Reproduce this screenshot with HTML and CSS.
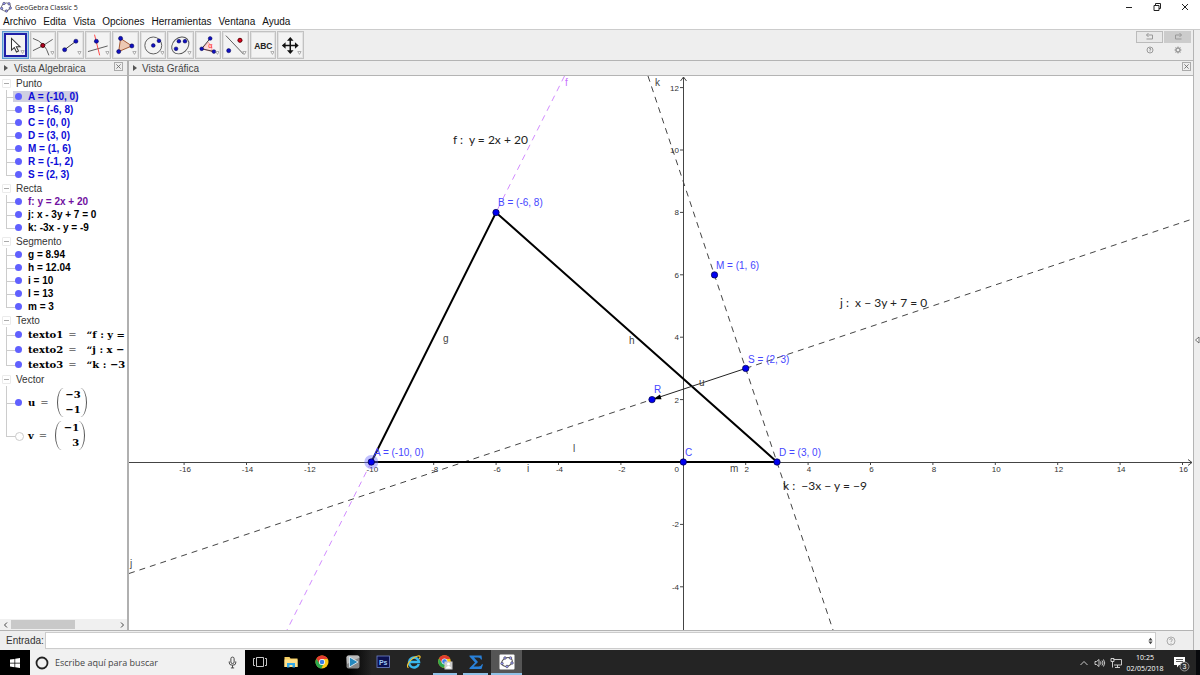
FILE: index.html
```html
<!DOCTYPE html>
<html lang="es">
<head>
  <meta charset="UTF-8" />
  <meta name="viewport" content="width=device-width, initial-scale=1.0" />
  <title>GeoGebra Classic 5</title>
  <link rel="stylesheet" href="styles.css">
</head>
<body>
  <header class="titlebar">
    <svg class="app-logo" viewBox="0 0 12 12"><ellipse cx="6" cy="6" rx="4.6" ry="3.8" transform="rotate(-25 6 6)" fill="none" stroke="#667" stroke-width="1"/><g fill="#9999ff" stroke="#445" stroke-width=".6"><circle cx="4" cy="2.5" r="1.2"/><circle cx="9" cy="2.8" r="1.2"/><circle cx="10.3" cy="7" r="1.2"/><circle cx="6.4" cy="10" r="1.2"/><circle cx="1.6" cy="7.4" r="1.2"/></g></svg>
    <span class="title">GeoGebra Classic 5</span>
    <div class="window-buttons">
      <button aria-label="Minimizar"><svg viewBox="0 0 10 10"><path d="M2 5.5h6"/></svg></button>
      <button aria-label="Restaurar"><svg viewBox="0 0 10 10"><path d="M2 3.5h5v5h-5zM3.5 3.5v-2h5v5h-1.5"/></svg></button>
      <button aria-label="Cerrar"><svg viewBox="0 0 10 10"><path d="M2 2l6 6M8 2l-6 6"/></svg></button>
    </div>
  </header>

  <nav class="menubar">
    <button>Archivo</button>
    <button>Edita</button>
    <button>Vista</button>
    <button>Opciones</button>
    <button>Herramientas</button>
    <button>Ventana</button>
    <button>Ayuda</button>
  </nav>

  <main class="workspace">
    <div class="workspace-main">
      <div class="toolbar">
        <div class="tools">
          <button class="tool selected" aria-label="Elige y mueve"><svg viewBox="0 0 24 24"><path d="M8 5v12.500l3-2.700 2.300 4.700 2.200-1-2.400-4.700h4z" fill="#fff" stroke="#333" stroke-width="1.100"/><path class="more" d="M18 18h3.500l-1.700 3z"/></svg></button>
          <button class="tool" aria-label="Intersección"><svg viewBox="0 0 24 24"><path d="M1 5q13 4 17 18M1 18Q11 14 22 6" fill="none" stroke="#555"/><circle cx="11.500" cy="12.500" r="2.200" fill="#b00020" stroke="#400"/><path class="more" d="M20 19h3.500l-1.700 3z"/></svg></button>
          <button class="tool" aria-label="Segmento"><svg viewBox="0 0 24 24"><path d="M6 17L18 8" stroke="#333"/><circle cx="6" cy="17" r="2.200" class="pt"/><circle cx="18" cy="8" r="2.200" class="pt"/><path class="more" d="M20 19h3.500l-1.700 3z"/></svg></button>
          <button class="tool" aria-label="Perpendicular"><svg viewBox="0 0 24 24"><path d="M1 19L22 13" stroke="#555"/><path d="M8 1l5.500 22" stroke="#ff4040"/><circle cx="10" cy="8" r="2.200" class="pt"/><path class="more" d="M20 19h3.500l-1.700 3z"/></svg></button>
          <button class="tool" aria-label="Polígono"><svg viewBox="0 0 24 24"><path d="M7 5l12 8-14 6z" fill="#edc9b4" stroke="#a0522d"/><circle cx="7" cy="5" r="2.200" class="pt"/><circle cx="19" cy="13" r="2.200" class="pt"/><circle cx="5" cy="19" r="2.200" class="pt"/><path class="more" d="M20 19h3.500l-1.700 3z"/></svg></button>
          <button class="tool" aria-label="Circunferencia"><svg viewBox="0 0 24 24"><circle cx="12" cy="12.500" r="9" fill="none" stroke="#555"/><circle cx="12" cy="12.500" r="2" class="pt"/><circle cx="18" cy="7.500" r="2" class="pt"/><path class="more" d="M20 19h3.500l-1.700 3z"/></svg></button>
          <button class="tool" aria-label="Elipse"><svg viewBox="0 0 24 24"><ellipse cx="12" cy="12.500" rx="10" ry="8" transform="rotate(-42 12 12.500)" fill="none" stroke="#555"/><circle cx="10.500" cy="8" r="2" class="pt"/><circle cx="17" cy="8" r="2" class="pt"/><circle cx="7.500" cy="16" r="2" class="pt"/><path class="more" d="M20 19h3.500l-1.700 3z"/></svg></button>
          <button class="tool" aria-label="Ángulo"><svg viewBox="0 0 24 24"><path d="M5 16l7-7q5 4 4 10z" fill="#ffd8d8" stroke="#ff7070" stroke-width=".6"/><path d="M14 5L5 16l13 3" fill="none" stroke="#333"/><text x="12" y="15" font-size="8" fill="#ff3030">α</text><circle cx="14" cy="5" r="2" class="pt"/><circle cx="5" cy="16" r="2" class="pt"/><circle cx="18" cy="19" r="2" class="pt"/><path class="more" d="M20 19h3.500l-1.700 3z"/></svg></button>
          <button class="tool" aria-label="Simetría axial"><svg viewBox="0 0 24 24"><path d="M2 2l19 20" stroke="#555"/><circle cx="5" cy="18" r="2.200" class="pt"/><circle cx="17" cy="7" r="2.200" fill="#e00020" stroke="#500"/><path class="more" d="M20 19h3.500l-1.700 3z"/></svg></button>
          <button class="tool" aria-label="Texto"><svg viewBox="0 0 24 24"><text x="12" y="16" font-size="9" font-weight="bold" text-anchor="middle" fill="#222">ABC</text><path class="more" d="M20 19h3.500l-1.700 3z"/></svg></button>
          <button class="tool" aria-label="Desplaza vista gráfica"><svg viewBox="0 0 24 24"><path d="M12 6v13M5.500 12.500h13" stroke="#111" stroke-width="1.600"/><path d="M12 3.500l3.500 4h-7zM12 21.500l3.500-4h-7zM3 12.500l4-3.500v7zM21 12.500l-4-3.500v7z" fill="#111"/><path class="more" d="M20 19h3.500l-1.700 3z"/></svg></button>
        </div>
        <div class="toolbar-actions">
          <button class="undo" aria-label="Deshace"><svg viewBox="0 0 12 10"><path d="M4.500 1L2.500 3l2 2M2.500 3h6v4h-6"/></svg></button>
          <button class="redo" aria-label="Rehace"><svg viewBox="0 0 12 10"><path d="M7.500 1l2 2-2 2M9.500 3h-6v4h6"/></svg></button>
          <button aria-label="Ayuda"><svg viewBox="0 0 12 10"><circle cx="6" cy="5" r="3"/><path d="M5 4q1-1.500 2 0L6 5.500v1"/></svg></button>
          <button aria-label="Preferencias"><svg viewBox="0 0 12 10"><circle cx="6" cy="5" r="2" stroke-width="1.400"/><path d="M6 1.500v1.500M6 7v1.500M2.500 5h1.500M8 5h1.500M3.500 2.500l1 1M8.500 2.500l-1 1M3.500 7.500l1-1M8.500 7.500l-1-1"/></svg></button>
        </div>
      </div>

      <div class="views">
        <section class="algebra">
          <h2 class="view-header">
            <span class="arrow"></span>Vista Algebraica
            <button class="close" aria-label="Cierra Vista Algebraica"><svg viewBox="0 0 10 10"><path d="M2 2l6 6M8 2l-6 6"/></svg></button>
          </h2>
          <div class="tree">
            <div class="group">
              <button class="group-name"><i class="toggle"></i>Punto</button>
              <ul class="blue">
                <li><span class="selected">A = (-10, 0)</span></li>
                <li><span>B = (-6, 8)</span></li>
                <li><span>C = (0, 0)</span></li>
                <li><span>D = (3, 0)</span></li>
                <li><span>M = (1, 6)</span></li>
                <li><span>R = (-1, 2)</span></li>
                <li><span>S = (2, 3)</span></li>
              </ul>
            </div>
            <div class="group">
              <button class="group-name"><i class="toggle"></i>Recta</button>
              <ul>
                <li><span class="purple">f: y = 2x + 20</span></li>
                <li><span>j: x - 3y + 7 = 0</span></li>
                <li><span>k: -3x - y = -9</span></li>
              </ul>
            </div>
            <div class="group">
              <button class="group-name"><i class="toggle"></i>Segmento</button>
              <ul>
                <li><span>g = 8.94</span></li>
                <li><span>h = 12.04</span></li>
                <li><span>i = 10</span></li>
                <li><span>l = 13</span></li>
                <li><span>m = 3</span></li>
              </ul>
            </div>
            <div class="group">
              <button class="group-name"><i class="toggle"></i>Texto</button>
              <ul class="latex">
                <li><span>texto1</span><span class="eq">=</span><span>“f : y =</span></li>
                <li><span>texto2</span><span class="eq">=</span><span>“j : x −</span></li>
                <li><span>texto3</span><span class="eq">=</span><span>“k : −3</span></li>
              </ul>
            </div>
            <div class="group">
              <button class="group-name"><i class="toggle"></i>Vector</button>
              <ul class="latex vectors">
                <li><span>u</span><span class="eq">=</span><span class="matrix"><b>−3</b><b>−1</b></span></li>
                <li class="hidden-object"><span>v</span><span class="eq">=</span><span class="matrix"><b>−1</b><b>3</b></span></li>
              </ul>
            </div>
          </div>
          <div class="scrollbar">
            <button aria-label="Izquierda"><svg viewBox="0 0 8 8"><path d="M5 1.500L2.500 4 5 6.500"/></svg></button>
            <div class="track"><div class="thumb"></div></div>
            <button aria-label="Derecha"><svg viewBox="0 0 8 8"><path d="M3 1.500L5.500 4 3 6.500"/></svg></button>
          </div>
        </section>

        <section class="graphics">
          <h2 class="view-header">
            <span class="arrow"></span>Vista Gráfica
            <button class="close" aria-label="Cierra Vista Gráfica"><svg viewBox="0 0 10 10"><path d="M2 2l6 6M8 2l-6 6"/></svg></button>
          </h2>
          <svg class="plot" viewBox="129 76 1064 554" preserveAspectRatio="xMidYMid slice">
            <!-- axes -->
            <g class="axis">
              <path d="M129 462.500H1192M683.500 630V77M1188 459.500l4 3-4 3M680.500 81l3-4 3 4"/>
              <path id="ticks" d=""/>
            </g>
            <g class="tick-labels" id="tick-labels"></g>

            <!-- lines -->
            <path class="line-f" d="M564.500 76L496 212.500M371.300 462L287 630"/>
            <path class="line-dash" d="M129 573.500L652 399.500M745.700 368.400L1191 219.500"/>
            <path class="line-dash" d="M648 76L833 630"/>

            <!-- segments -->
            <path class="segment" d="M371.300 462L496 212.500L777 462M371.300 462H777"/>

            <!-- vector u -->
            <path class="vector" d="M745.700 368.400L657 397.900"/>
            <path d="M653 399.200l7-4.600 1.500 4.600z"/>

            <!-- points -->
            <circle cx="371.300" cy="462" r="7" fill="#6464ff" fill-opacity=".4"/>
            <g class="points">
              <circle cx="371.300" cy="462" r="3.200"/>
              <circle cx="496" cy="212.500" r="3.200"/>
              <circle cx="683.300" cy="462" r="3.200"/>
              <circle cx="777" cy="462" r="3.200"/>
              <circle cx="714.500" cy="274.900" r="3.200"/>
              <circle cx="652" cy="399.600" r="3.200"/>
              <circle cx="745.700" cy="368.400" r="3.200"/>
            </g>
            <g class="point-labels">
              <text x="374" y="456">A = (-10, 0)</text>
              <text x="498" y="206">B = (-6, 8)</text>
              <text x="685" y="456">C</text>
              <text x="779" y="456">D = (3, 0)</text>
              <text x="716" y="269">M = (1, 6)</text>
              <text x="654" y="393">R</text>
              <text x="748" y="363">S = (2, 3)</text>
            </g>
            <g class="labels">
              <text x="565" y="86" class="label-f">f</text>
              <text x="655" y="86">k</text>
              <text x="130" y="567">j</text>
              <text x="443" y="342">g</text>
              <text x="629" y="344">h</text>
              <text x="573" y="452">l</text>
              <text x="527" y="472">i</text>
              <text x="730" y="472">m</text>
              <text x="699" y="386">u</text>
            </g>
            <g class="equations">
              <text x="453" y="144">f :&nbsp; y = 2x + 20</text>
              <text x="840" y="307">j :&nbsp; x − 3y + 7 = 0</text>
              <text x="783" y="490">k :&nbsp; −3x − y = −9</text>
            </g>
          </svg>
        </section>
      </div>

      <div class="input-bar">
        <label for="entrada">Entrada:</label>
        <div class="input-box">
          <input id="entrada" type="text">
          <svg viewBox="0 0 6 8"><path d="M3 0l2.500 3.300h-5zM3 8l2.500-3.300h-5z"/></svg>
        </div>
        <button class="input-help" aria-label="Ayuda de entrada"><svg viewBox="0 0 10 10"><circle cx="5" cy="5" r="4"/><path d="M3.700 4q0-1.400 1.300-1.400T6.300 4Q6.300 4.700 5 5.500v.6M5 7v.8"/></svg></button>
      </div>
    </div>
    <button class="side-strip" aria-label="Apariencias"><svg viewBox="0 0 6 8"><path d="M5 1v6L1.500 4z"/></svg></button>
  </main>

  <footer class="taskbar">
    <button class="start" aria-label="Inicio"><svg viewBox="0 0 12 12"><path d="M1 2.500l4.500-.6v3.800H1zM6.200 1.800L11 1v4.700H6.200zM1 6.400h4.500v3.800L1 9.600zM6.200 6.400H11V11l-4.800-.7z" fill="#fff"/></svg></button>
    <div class="search">
      <svg class="cortana" viewBox="0 0 14 14"><circle cx="7" cy="7" r="5.500" fill="none" stroke="#222" stroke-width="1.800"/></svg>
      <input type="text" aria-label="Buscar" placeholder="Escribe aquí para buscar">
      <svg class="mic" viewBox="0 0 10 12"><g fill="none" stroke="#444" stroke-width=".9"><rect x="3.500" y="1" width="3" height="6" rx="1.500"/><path d="M2 5v1.500q0 2 3 2t3-2V5M5 8.500V11M3.500 11h3"/></g></svg>
    </div>
    <div class="apps">
      <button aria-label="Vista de tareas"><svg viewBox="0 0 16 16"><path d="M4.500 3.500h7v9h-7zM3 4.500H1.500v7H3M13 4.500h1.500v7H13" fill="none" stroke="#ddd" stroke-width=".9"/></svg></button>
      <button aria-label="Explorador"><svg viewBox="0 0 16 16"><path d="M1.500 3h5l1 1.500h7V13h-13z" fill="#f5ce62"/><path d="M1.500 5.500h13V13h-13z" fill="#ffe08a"/><path d="M4 13.500V9h8v4.500h-2.500V11h-3v2.500z" fill="#32a8e8"/></svg></button>
      <button aria-label="Chrome"><svg viewBox="0 0 16 16"><circle cx="8" cy="8" r="6.500" fill="#fbc817"/><path d="M2.400 4.700A6.500 6.500 0 0 1 13.800 5H8L5.200 9.500z" fill="#e33b2e"/><path d="M2.400 4.700L5.400 9.500 9 11 7.300 14.500A6.500 6.500 0 0 1 2.400 4.700z" fill="#2da94f"/><circle cx="8" cy="8" r="3" fill="#fff"/><circle cx="8" cy="8" r="2.300" fill="#3c7fe8"/></svg></button>
      <button aria-label="Reproductor"><svg viewBox="0 0 16 16"><rect x="1.500" y="1.500" width="13" height="13" rx="2" fill="#888"/><path d="M1.500 3.500q0-2 2-2h9q2 0 2 2L2 10z" fill="#bbb"/><path d="M4.500 3l8.500 5-8.500 5z" fill="#2488bd" stroke="#e8f4fa" stroke-width=".8"/></svg></button>
      <button aria-label="Photoshop"><svg viewBox="0 0 16 16"><rect x="2" y="2" width="12.500" height="11.500" fill="#0b1050" stroke="#7184c9" stroke-width=".8"/><text x="8.200" y="10.500" font-size="7" font-weight="bold" text-anchor="middle" fill="#9fc9f5">Ps</text></svg></button>
      <button aria-label="Internet Explorer"><svg viewBox="0 0 16 16"><path d="M12.800 10A5 5 0 1 1 13 8H4" fill="none" stroke="#39b7ee" stroke-width="2.500"/><path d="M2.500 13.800C-1 12.500 5 3.500 12 2q3.500-.4 1.300 3" fill="none" stroke="#f4c430" stroke-width="1.200"/></svg></button>
      <button class="open" aria-label="Chrome, sesión"><svg viewBox="0 0 16 16"><circle cx="7.500" cy="7.500" r="6.300" fill="#fbc817"/><path d="M2 4.500A6.300 6.300 0 0 1 13.300 5H7.500L5 9z" fill="#e33b2e"/><path d="M2 4.500L5 9l3.500 1.500-1.500 3.300A6.300 6.300 0 0 1 2 4.500z" fill="#2da94f"/><circle cx="7.500" cy="7.500" r="2.700" fill="#3c7fe8" stroke="#fff" stroke-width=".7"/><rect x="7.500" y="7.500" width="8" height="8" fill="#ccc"/><circle cx="11.500" cy="10" r="1.500" fill="#fff"/><path d="M9 14.500q0-2.500 2.500-2.500t2.500 2.500z" fill="#fff"/></svg></button>
      <button class="open" aria-label="Sumatorio"><svg viewBox="0 0 16 16"><path d="M1.500 1.500h12l.5 4h-1q-.5-2-3-2H6L10 8l-4.500 4.500h5q2.500 0 3.500-2.300h1L13.500 15H1.500v-1L7 8.500 1.500 2.500z" fill="#2980d8"/></svg></button>
      <button class="open active" aria-label="GeoGebra"><svg viewBox="0 0 16 16"><rect x=".5" y=".5" width="15" height="15" rx="1" fill="#fff"/><ellipse cx="8" cy="8" rx="5.500" ry="4.200" transform="rotate(-25 8 8)" fill="none" stroke="#555"/><g fill="#9999ff" stroke="#444" stroke-width=".6"><circle cx="6" cy="4" r="1.300"/><circle cx="11.500" cy="4" r="1.300"/><circle cx="13" cy="9" r="1.300"/><circle cx="8" cy="12.500" r="1.300"/><circle cx="3" cy="9.500" r="1.300"/></g></svg></button>
    </div>
    <div class="tray">
      <svg viewBox="0 0 12 12"><path d="M2.500 8L6 4.500 9.500 8"/></svg>
      <svg viewBox="0 0 12 12"><path d="M1 4.500h1.500L5 2.500v7l-2.500-2H1zM6.500 4.500q1 1.500 0 3M8 3.500q2 2.500 0 5M9.500 2.500q2.500 3.500 0 7"/></svg>
      <svg viewBox="0 0 12 12"><path d="M3.500 2.500h8v5.500H4M7.500 8v2.500M5 10.500h5M1 1.500v3h3v-3zM2.500 4.500v6"/></svg>
      <div class="clock"><span>10:25</span><span>02/05/2018</span></div>
      <button class="notifications" aria-label="Notificaciones"><svg viewBox="0 0 18 18"><path d="M2 3h11v8H7l-2 2.500V11H2z" fill="#fff"/><path d="M4 5.500h7M4 7.500h7" stroke="#333" stroke-width=".8"/><circle cx="12.500" cy="12.500" r="4.500" fill="#333" stroke="#aaa" stroke-width=".8"/><text x="12.500" y="15.200" font-size="7" text-anchor="middle" fill="#fff">3</text></svg></button>
    </div>
  </footer>

  <script>
    // axis marks every 2 units
    const unit = 31.2;
    const origin = { x: 683.3, y: 462 };
    const labels = document.getElementById("tick-labels");
    let ticks = "";

    function addLabel(x, y, text, anchor) {
      const el = document.createElementNS("http://www.w3.org/2000/svg", "text");
      el.setAttribute("x", x);
      el.setAttribute("y", y);
      el.setAttribute("text-anchor", anchor);
      el.textContent = text;
      labels.appendChild(el);
    }

    for (let n = -16; n <= 16; n += 2) {
      if (n === 0) continue;
      const x = origin.x + n * unit;
      ticks += `M${x} 462v3`;
      addLabel(x + 1, 472, n, "middle");
    }
    for (let n = -4; n <= 12; n += 2) {
      if (n === 0) continue;
      const y = origin.y - n * unit;
      ticks += `M683 ${y}h-3`;
      addLabel(679, y + 3, n, "end");
    }
    addLabel(679, 472, 0, "end");
    document.getElementById("ticks").setAttribute("d", ticks);
  </script>
</body>
</html>
```
FILE: styles.css
```css
* {
  box-sizing: border-box;
}

html, body {
  margin: 0;
  padding: 0;
  height: 100%;
}

body {
  display: flex;
  flex-direction: column;
  overflow: hidden;
  background: #fff;
  color: #333;
  font-family: "Liberation Sans", Arial, sans-serif;
  font-size: 10px;
}

button {
  margin: 0;
  padding: 0;
  border: none;
  background: none;
  color: inherit;
  font: inherit;
}

svg {
  display: block;
}

.titlebar {
  display: flex;
  align-items: center;
  height: 14px;
  padding: 0 10px 0 0;
}

.app-logo {
  width: 12px;
  height: 12px;
  margin-right: 3px;
}

.title {
  flex: 1;
  font-family: "Open Sans", sans-serif;
  font-size: 7px;
  color: #222;
}

.window-buttons {
  display: flex;
  gap: 18px;
}

.window-buttons svg {
  width: 10px;
  height: 10px;
  fill: none;
  stroke: #222;
  stroke-width: 1;
}

.menubar {
  display: flex;
  gap: 7px;
  height: 15px;
  padding: 0 3px;
  color: #111;
}

.workspace {
  flex: 1;
  display: flex;
  min-height: 0;
  border-top: 1px solid #ccc;
  background: #eee;
}

.workspace-main {
  flex: 1;
  display: flex;
  flex-direction: column;
  min-width: 0;
}

.toolbar {
  display: flex;
  justify-content: space-between;
  height: 31px;
  border-bottom: 1px solid #b4b4b4;
}

.tools {
  display: grid;
  grid-template-columns: repeat(11, 1fr);
  width: 305px;
  padding: 1px 0 1px 2px;
}

.tool {
  display: flex;
  margin-right: 1px;
  padding: 1px;
  border: 1px solid #c2c2c2;
  background: #e2e2e2;
}

.tool svg {
  width: 100%;
  height: 100%;
  background: #f3f3f3;
}

.tool.selected {
  border-color: #5b9bd0;
  background: #a8cbe8;
}

.tool.selected svg {
  box-shadow: inset 0 0 0 2px #2020a8;
}

.pt {
  fill: #1010c0;
  stroke: #000040;
  stroke-width: 0.5;
}

.more {
  fill: #fff;
  stroke: #888;
  stroke-width: 0.7;
}

.toolbar-actions {
  display: grid;
  grid-template-columns: 27px 27px;
  grid-template-rows: 12px 12px;
  gap: 1px;
  padding: 1px 2px 0 0;
}

.toolbar-actions button {
  display: flex;
  align-items: center;
  justify-content: center;
}

.toolbar-actions svg {
  width: 12px;
  height: 10px;
  fill: none;
  stroke: #999;
  stroke-width: 1;
}

.toolbar-actions .undo {
  border: 1px solid #bbb;
  background: #e8e8e8;
}

.toolbar-actions .redo {
  background: #ccc;
}

.views {
  flex: 1;
  display: flex;
  min-height: 0;
}

.algebra {
  display: flex;
  flex-direction: column;
  width: 129px;
  border-right: 2px solid #b0b0b0;
}

.graphics {
  flex: 1;
  display: flex;
  flex-direction: column;
  min-width: 0;
}

.view-header {
  display: flex;
  align-items: center;
  flex: none;
  height: 15px;
  margin: 0;
  padding: 0 2px 0 4px;
  border-bottom: 1px solid #b4b4b4;
  font-size: 10px;
  font-weight: normal;
  color: #444;
}

.arrow {
  width: 4px;
  margin-right: 6px;
  border: 3px solid transparent;
  border-left: 4px solid #555;
  border-right: none;
}

.graphics .arrow {
  margin-right: 5px;
}

.close {
  width: 9px;
  height: 9px;
  margin: 0 0 3px auto;
  border: 1px solid #aaa;
}

.close svg {
  fill: none;
  stroke: #666;
  stroke-width: 1.2;
}

.algebra .close {
  margin-right: 2px;
}

.tree {
  flex: 1;
  min-height: 0;
  padding-top: 1px;
  overflow: hidden;
  background: #fff;
}

.group {
  margin-bottom: 1px;
}

.group-name {
  display: flex;
  align-items: center;
  height: 13px;
  padding-left: 2px;
  color: #333;
}

.toggle {
  display: flex;
  align-items: center;
  justify-content: center;
  width: 9px;
  height: 9px;
  margin-right: 5px;
  border: 1px solid #ebebeb;
  border-radius: 1px;
}

.toggle::before {
  content: "";
  width: 5px;
  height: 1px;
  background: #aaa;
}

.tree ul {
  margin: 0;
  padding: 0;
  list-style: none;
  font-weight: bold;
  color: #000;
}

.tree .blue {
  color: #0c0cd8;
}

.tree .purple {
  color: #7010a0;
}

.tree li {
  position: relative;
  display: flex;
  align-items: center;
  height: 13px;
  padding-left: 28px;
  white-space: nowrap;
}

/* branch of the tree: vertical part, then horizontal part */
.tree li::before {
  content: "";
  position: absolute;
  left: 6px;
  top: 0;
  width: 9px;
  height: 50%;
  border-left: 1px solid #ccc;
  border-bottom: 1px solid #ccc;
}

.tree li:not(:last-child) {
  background: linear-gradient(#ccc, #ccc) 6px 0 / 1px 100% no-repeat;
}

.tree li::after {
  content: "";
  position: absolute;
  left: 15px;
  top: calc(50% - 4px);
  width: 7px;
  height: 7px;
  border-radius: 50%;
  background: #6060ff;
}

.tree .hidden-object::after {
  border: 1px solid #ccc;
  background: #fff;
}

.tree li .selected {
  margin-left: -15px;
  padding-left: 15px;
  background: #cfcfe2;
}

.tree .latex {
  font-family: "DejaVu Serif", serif;
  font-size: 10px;
}

.tree .latex li {
  height: 15px;
}

.tree .eq {
  margin: 0 10px 0 5px;
  font-weight: normal;
}

.tree .vectors li {
  height: 33px;
}

.tree .vectors .eq {
  margin-right: 8px;
}

.matrix {
  display: flex;
  flex-direction: column;
  justify-content: space-around;
  align-items: flex-end;
  width: 30px;
  height: 29px;
  padding: 0 5px;
  border: 1px solid #555;
  border-width: 0 1px;
  border-radius: 7px / 15px;
  line-height: 14px;
}

.scrollbar {
  display: flex;
  align-items: center;
  height: 11px;
  background: #f0f0f0;
}

.scrollbar button {
  width: 11px;
}

.scrollbar svg {
  width: 8px;
  height: 8px;
  margin: auto;
  fill: none;
  stroke: #444;
}

.track {
  flex: 1;
  height: 9px;
}

.thumb {
  width: 61%;
  height: 100%;
  background: #c9c9c9;
}

.plot {
  flex: 1;
  width: 100%;
  min-height: 0;
  background: #fff;
}

.axis {
  fill: none;
  stroke: #444;
  stroke-width: 1;
}

.tick-labels {
  font-size: 8px;
  fill: #333;
}

.line-f {
  fill: none;
  stroke: #d28cff;
  stroke-dasharray: 6 5;
}

.line-dash {
  fill: none;
  stroke: #444;
  stroke-dasharray: 6 5;
}

.segment {
  fill: none;
  stroke: #000;
  stroke-width: 2;
}

.vector {
  stroke: #222;
}

.points {
  fill: #0000f0;
  stroke: #000040;
  stroke-width: 0.7;
}

.point-labels {
  fill: #4646ff;
}

.labels {
  fill: #444;
}

.labels .label-f {
  fill: #c870ff;
}

.equations {
  font-family: Lato, sans-serif;
  font-size: 12px;
  fill: #222;
}

.input-bar {
  display: flex;
  align-items: center;
  height: 20px;
  padding-left: 6px;
  border-top: 1px solid #b4b4b4;
}

.input-box {
  flex: 1;
  display: flex;
  align-items: center;
  height: 17px;
  margin-left: 1px;
  padding-right: 2px;
  border: 1px solid #ccc;
  background: #fff;
}

.input-box input {
  flex: 1;
  min-width: 0;
  height: 14px;
  padding: 0 2px;
  border: none;
  outline: none;
  background: none;
  font: inherit;
}

.input-box svg {
  width: 5px;
  height: 8px;
  fill: #444;
}

.input-help {
  width: 37px;
  padding-left: 10px;
}

.input-help svg {
  width: 10px;
  height: 10px;
  fill: none;
  stroke: #999;
  stroke-width: 0.8;
}

.side-strip {
  display: flex;
  align-items: center;
  width: 7px;
  border-left: 1px solid #b4b4b4;
}

.side-strip svg {
  width: 6px;
  height: 8px;
  fill: #fff;
  stroke: #555;
  stroke-width: 0.8;
}

.taskbar {
  display: flex;
  height: 25px;
  background: linear-gradient(90deg, #000 0 29%, #242424 31%);
}

.start {
  width: 30px;
}

.start svg {
  width: 12px;
  height: 12px;
  margin: auto;
}

.search {
  display: flex;
  align-items: center;
  width: 215px;
  padding: 0 7px 0 5px;
  background: #f1f1f1;
}

.search input {
  flex: 1;
  min-width: 0;
  padding: 0 0 0 6px;
  border: none;
  outline: none;
  background: none;
  font-family: "Open Sans", sans-serif;
  font-size: 9px;
}

.search input::placeholder {
  color: #444;
  opacity: 1;
}

.cortana {
  width: 14px;
  height: 14px;
}

.mic {
  width: 11px;
  height: 13px;
}

.apps {
  display: grid;
  grid-template-columns: repeat(9, 1fr);
  width: 277px;
}

.apps button {
  border-bottom: 2px solid transparent;
}

.apps svg {
  width: 16px;
  height: 16px;
  margin: auto;
}

.apps .open {
  margin: 0 3px;
  border-bottom-color: #8fc1e6;
}

.apps .active {
  margin: 0;
  background: #555;
}

.tray {
  display: flex;
  align-items: center;
  gap: 4px;
  margin-left: auto;
  padding-right: 6px;
  border-right: 4px solid #08090c;
  color: #fff;
}

.tray > svg {
  width: 12px;
  height: 12px;
  fill: none;
  stroke: #ddd;
  stroke-width: 0.9;
}

.clock {
  display: flex;
  flex-direction: column;
  align-items: center;
  width: 38px;
  font-family: "Open Sans", sans-serif;
  font-size: 7px;
  line-height: 11px;
}

.notifications {
  margin-left: 4px;
}

.notifications svg {
  width: 18px;
  height: 18px;
}
```
